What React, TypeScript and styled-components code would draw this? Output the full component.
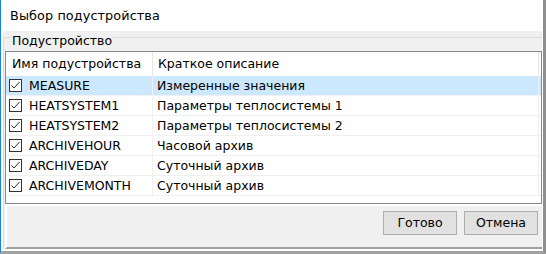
import React from 'react';
import styled, {createGlobalStyle} from "styled-components";

const GlobalStyle = createGlobalStyle`
    html, body {
        margin: 0;
        padding: 0;
        background: #ffffff;
    }
    * {
        box-sizing: border-box;
    }
`;

interface SubDevice {
    name: string,
    description: string,
    checked: boolean
}

const devices: SubDevice[] = [
    {name: "MEASURE", description: "Измеренные значения", checked: true},
    {name: "HEATSYSTEM1", description: "Параметры теплосистемы 1", checked: true},
    {name: "HEATSYSTEM2", description: "Параметры теплосистемы 2", checked: true},
    {name: "ARCHIVEHOUR", description: "Часовой архив", checked: true},
    {name: "ARCHIVEDAY", description: "Суточный архив", checked: true},
    {name: "ARCHIVEMONTH", description: "Суточный архив", checked: true},
];

const Frame = styled.div`
    width: 546px;
    height: 254px;
    display: flex;
    flex-direction: column;
    background: #ffffff;
    border-left: 1px solid #1883d7;
    border-right: 3px solid #8f8f8f;
    border-bottom: 3px solid #a3a3a3;
    font-family: "DejaVu Sans", Verdana, sans-serif;
    font-size: 12.5px;
    color: #000;
`;

const TitleBar = styled.div`
    height: 31px;
    flex-shrink: 0;
    display: flex;
    align-items: center;
    padding-left: 9px;
    padding-bottom: 1px;
    font-size: 12.8px;
    letter-spacing: 0.1px;
`;

const Body = styled.div`
    flex: 1;
    display: flex;
    flex-direction: column;
    background: #f0f0f0;
    border-left: 2px solid #ffffff;
    border-right: 1px solid #ffffff;
    border-bottom: 2px solid #ffffff;
    padding-top: 6px;
`;

const GroupBox = styled.div`
    position: relative;
    flex: 1;
    display: flex;
    flex-direction: column;
    border-top: 1px solid #dcdcdc;
    border-left: 1px solid #dcdcdc;
    padding: 13px 0 0 1px;
`;

const Legend = styled.span`
    position: absolute;
    top: -4px;
    left: 7px;
    padding: 0 1px;
    line-height: 14px;
    background: #f0f0f0;
`;

const ListView = styled.div`
    height: 153px;
    border: 1px solid #828790;
    background: #ffffff;
    overflow: hidden;
`;

const HeaderRow = styled.div`
    display: grid;
    grid-template-columns: 147px 386px;
    height: 24px;
`;

const HeaderCell = styled.div<{ $pad: number }>`
    display: flex;
    align-items: center;
    padding-left: ${props => props.$pad}px;
    padding-bottom: 1px;
    border-right: 1px solid #e5e5e5;
`;

const Row = styled.div<{ $selected?: boolean }>`
    display: grid;
    grid-template-columns: 147px 386px;
    height: 20px;
    background: ${props => props.$selected ? "#cce8ff" : "transparent"};
    border-bottom: 1px solid #f0f0f0;
`;

const Cell = styled.div<{ $pad: number }>`
    display: flex;
    align-items: center;
    padding-left: ${props => props.$pad}px;
    gap: 7px;
    border-right: 1px solid #f0f0f0;
    white-space: nowrap;
`;

const CheckBox = styled.span`
    width: 13px;
    height: 13px;
    flex-shrink: 0;
    border: 1px solid #333333;
    background: #ffffff;
    display: flex;
    align-items: center;
    justify-content: center;
`;

const BottomPanel = styled.div`
    height: 45px;
    display: flex;
    justify-content: flex-end;
    gap: 7px;
    padding: 5px 4px 0 0;
    border-top: 2px solid #ffffff;
    border-left: 2px solid #ffffff;
    border-bottom: 2px solid #a0a0a0;
    background: #f0f0f0;
`;

const Button = styled.button`
    width: 74px;
    height: 24px;
    border: 1px solid #adadad;
    background: #e1e1e1;
    font-family: inherit;
    font-size: 12.5px;
    color: #000;
    padding: 0 0 1px 0;
`;

const Check = () => (
    <CheckBox>
        <svg width="11" height="11" viewBox="0 0 11 11">
            <path d="M1.5 5.5 L4 8 L9.5 2" fill="none" stroke="#2b2b2b" strokeWidth="1"/>
        </svg>
    </CheckBox>
);

const App = () => {
    return (
        <>
            <GlobalStyle/>
            <Frame>
                <TitleBar>Выбор подустройства</TitleBar>
                <Body>
                    <GroupBox>
                        <Legend>Подустройство</Legend>
                        <ListView>
                            <HeaderRow>
                                <HeaderCell $pad={6}>Имя подустройства</HeaderCell>
                                <HeaderCell $pad={5}>Краткое описание</HeaderCell>
                            </HeaderRow>
                            {devices.map((d, i) =>
                                <Row key={d.name} $selected={i === 0}>
                                    <Cell $pad={3}>
                                        {d.checked && <Check/>}
                                        {d.name}
                                    </Cell>
                                    <Cell $pad={4}>{d.description}</Cell>
                                </Row>
                            )}
                            <Row/>
                        </ListView>
                        <BottomPanel>
                            <Button>Готово</Button>
                            <Button>Отмена</Button>
                        </BottomPanel>
                    </GroupBox>
                </Body>
            </Frame>
        </>
    );
};

export default App;
